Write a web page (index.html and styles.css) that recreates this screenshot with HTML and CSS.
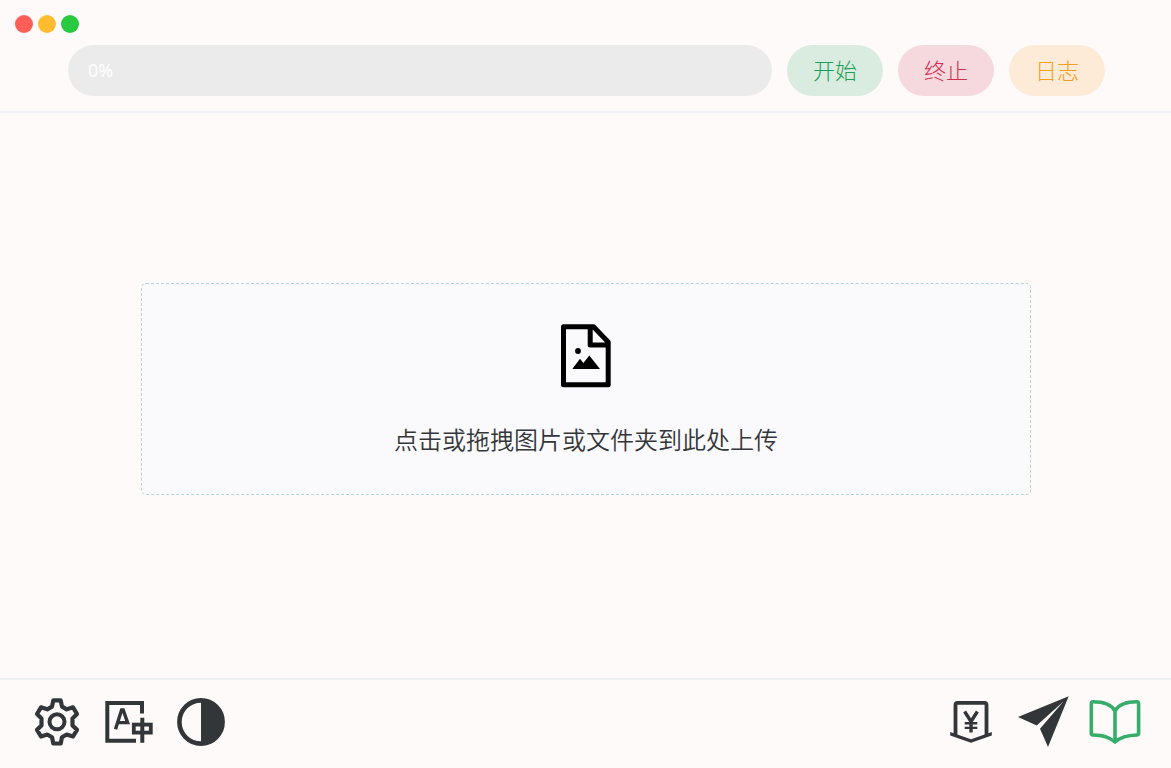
FILE: index.html
```html
<!DOCTYPE html>
<html lang="zh-CN">
<head>
<meta charset="utf-8">
<meta name="viewport" content="width=device-width, initial-scale=1">
<title>图片上传</title>
<link rel="stylesheet" href="styles.css">
</head>
<body>
<div class="app">
  <header class="header">
    <div class="window-controls">
      <button class="dot dot-close" type="button" aria-label="关闭"></button>
      <button class="dot dot-minimize" type="button" aria-label="最小化"></button>
      <button class="dot dot-maximize" type="button" aria-label="最大化"></button>
    </div>
    <div class="toolbar">
      <div class="progress" role="progressbar" aria-valuemin="0" aria-valuemax="100" aria-valuenow="0">0%</div>
      <button class="action action-start" type="button">开始</button>
      <button class="action action-stop" type="button">终止</button>
      <button class="action action-log" type="button">日志</button>
    </div>
  </header>

  <main class="main">
    <button class="dropzone" type="button">
      <svg class="dropzone-icon" viewBox="0 0 72 72" aria-hidden="true">
        <path class="line" stroke-width="5" d="M13.5 6.8H43.5L58.2 22V64.8H13.5ZM40.2 7V25H58"/>
        <circle class="solid" cx="28" cy="31" r="2.9"/>
        <path class="solid" d="M22.3 49L30 38.7L33.4 43L39.3 35.5L50 49Z"/>
      </svg>
      <span class="dropzone-text">点击或拖拽图片或文件夹到此处上传</span>
    </button>
  </main>

  <footer class="footer">
    <nav class="icon-group" aria-label="设置">
      <button class="icon-button" type="button" aria-label="设置">
        <svg viewBox="0 0 54 54"><path class="line" stroke-width="4.2" d="M23.3 5.3H30.7L32 11.7L36.7 14.3L43 12.3L47 19L42.5 23.4V30.4L47 34.8L43 41.5L36.7 39.5L32 42.2L30.7 48.5H23.3L22 42.2L17.3 39.5L11 41.5L7 34.8L11.5 30.4V23.4L7 19L11 12.3L17.3 14.3L22 11.7Z"/><circle class="line" stroke-width="4" cx="27" cy="26.8" r="7.5"/></svg>
      </button>
      <button class="icon-button" type="button" aria-label="语言">
        <svg viewBox="0 0 54 54"><path class="line sharp" stroke-width="4" d="M40 18.5V8H5.3V45.7H34M40.3 22.7V47.7"/><rect class="line sharp" stroke-width="3.8" x="31.8" y="29.6" width="17" height="8"/><path class="line sharp" stroke-width="3.4" d="M13.5 34.2L19.6 15H21.2L25.6 27.6H16.5"/></svg>
      </button>
      <button class="icon-button" type="button" aria-label="主题">
        <svg viewBox="0 0 54 54"><circle class="line" stroke-width="4.6" cx="27" cy="27" r="21.6"/><path class="solid" d="M27 4A23 23 0 0 1 27 50Z"/></svg>
      </button>
    </nav>
    <nav class="icon-group" aria-label="帮助">
      <button class="icon-button" type="button" aria-label="赞助">
        <svg viewBox="0 0 54 54"><path class="line sharp" stroke-width="3.8" d="M11.5 40V9.8Q11.5 7.8 13.5 7.8H40.5Q42.5 7.8 42.5 9.8V40"/><path class="solid" d="M6.2 37L27 44.2L47.8 37V40.6L27 47.8L6.2 40.6Z"/><path class="line sharp" stroke-width="3.4" d="M20.6 16.5L27 26.5L33.4 16.5M27 25.5V37.5"/><path class="line sharp" stroke-width="2.4" d="M20.7 28.2H33.3M20.7 32.9H33.3"/></svg>
      </button>
      <button class="icon-button" type="button" aria-label="发送">
        <svg viewBox="0 0 54 54"><path class="solid" d="M52.7 1.3L2 22L20.7 30.4L47.4 6.6L24 33.8L32 52Z"/></svg>
      </button>
      <button class="icon-button icon-guide" type="button" aria-label="指南">
        <svg viewBox="0 0 54 54"><path class="line" stroke-width="3.6" d="M27 15.7C22.5 8.5 15 6.8 5 6.8Q3.3 6.8 3.3 8.8V38Q3.3 40 5 40C15 40.3 21 41.7 27 47C33 41.7 39 40.3 48.8 40Q50.6 40 50.6 38V8.8Q50.6 6.8 48.8 6.8C39 6.8 31.5 8.5 27 15.7V47"/></svg>
      </button>
    </nav>
  </footer>
</div>
</body>
</html>
```
FILE: styles.css
```css
* {
  box-sizing: border-box;
}

body {
  margin: 0;
  background: #fffafa;
  color: #333639;
  font-family: "Noto Sans", "Noto Sans CJK SC", sans-serif;
}

button {
  padding: 0;
  border: 0;
  background: none;
  color: inherit;
  font: inherit;
  cursor: pointer;
}

.app {
  display: flex;
  flex-direction: column;
  min-height: 100vh;
}

.header {
  padding: 15px 0;
  border-bottom: 2px solid #efeff5;
}

.window-controls {
  display: flex;
  gap: 5px;
  padding: 0 15px;
  margin-bottom: 12px;
}

.dot {
  width: 18px;
  height: 18px;
  border-radius: 50%;
}

.dot-close {
  background: #ff5f57;
}

.dot-minimize {
  background: #febc2e;
}

.dot-maximize {
  background: #28c840;
}

.toolbar {
  display: flex;
  gap: 15px;
  padding: 0 66px 0 68px;
}

.progress {
  flex: 1;
  height: 51px;
  padding: 0 20px;
  border-radius: 26px;
  background: #ebebeb;
  color: #fff;
  font-size: 18px;
  line-height: 51px;
}

.action {
  width: 96px;
  height: 51px;
  padding-bottom: 4px;
  border-radius: 26px;
  font-family: "Noto Sans CJK SC", sans-serif;
  font-size: 22px;
  font-weight: 300;
}

.action-start {
  background: #d9ecdf;
  color: #18a058;
}

.action-stop {
  background: #f6d9df;
  color: #d03050;
}

.action-log {
  background: #fdebd8;
  color: #f0a020;
}

.main {
  display: flex;
  flex: 1;
  align-items: center;
  padding: 0 140px 13px 141px;
}

.dropzone {
  display: flex;
  flex: 1;
  flex-direction: column;
  align-items: center;
  gap: 29px;
  padding: 36px 36px 37px;
  border: 1px dashed #b5d5d0;
  border-radius: 5px;
  background: #fafafc;
}

.dropzone-icon {
  width: 72px;
  height: 72px;
  color: #000;
}

.dropzone-text {
  font-family: "Noto Sans CJK SC", sans-serif;
  font-size: 24px;
  font-weight: 350;
  line-height: 36px;
}

.footer {
  display: flex;
  justify-content: space-between;
  padding: 15px 29px 19px 30px;
  border-top: 2px solid #efeff5;
}

.icon-group {
  display: flex;
  gap: 18px;
}

.icon-button {
  width: 54px;
  height: 54px;
}

.icon-button svg {
  display: block;
  width: 100%;
  height: 100%;
}

.icon-guide {
  color: #36ad6a;
}

.line {
  fill: none;
  stroke: currentColor;
  stroke-linejoin: round;
}

.sharp {
  stroke-linejoin: miter;
}

.solid {
  fill: currentColor;
}
```
